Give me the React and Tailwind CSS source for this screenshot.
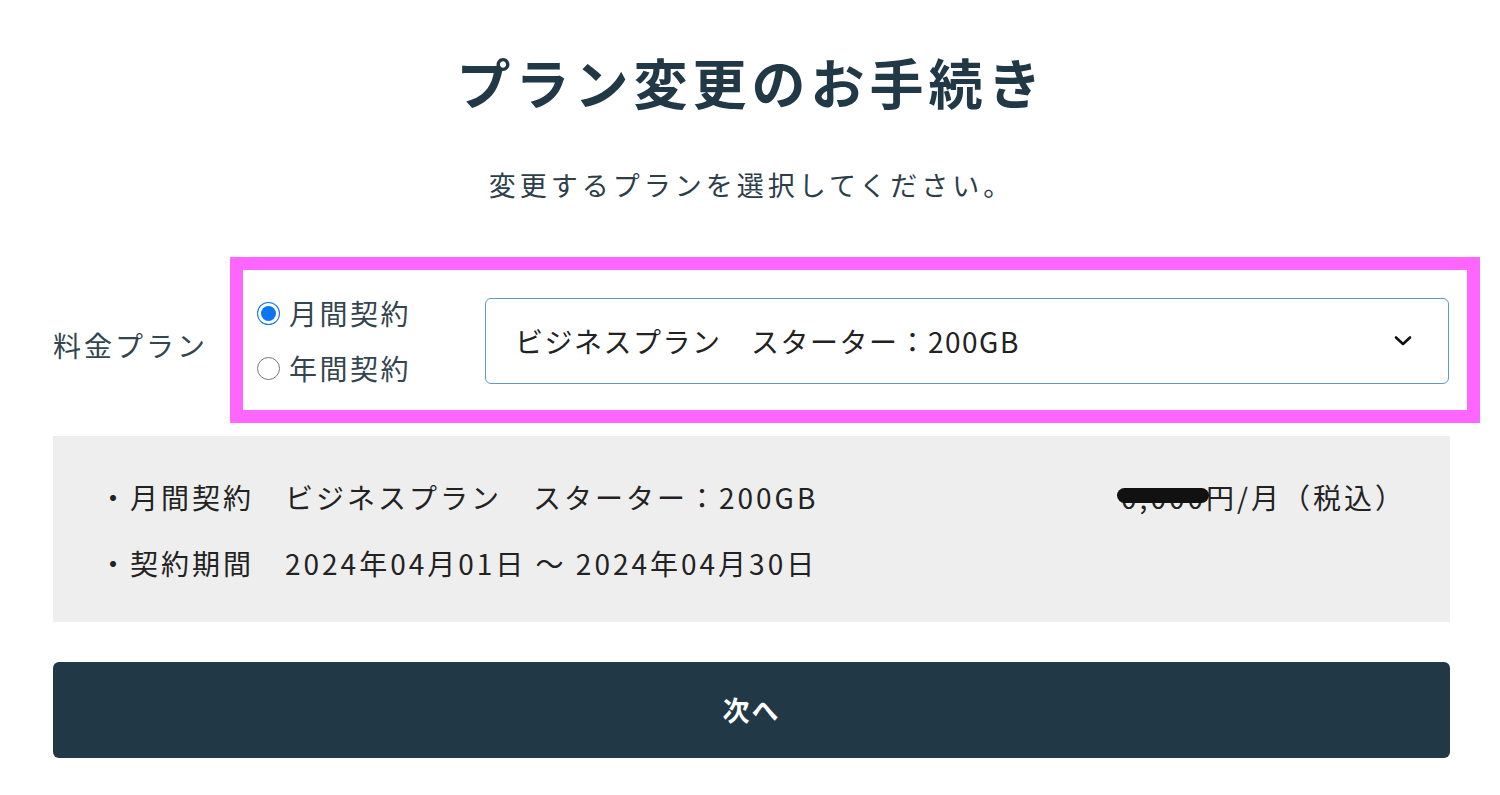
import React, { useState } from 'react';

const Radio = ({ checked, label, onClick }) => {
  return (
    <label className="flex items-center gap-[9px] cursor-pointer" onClick={onClick}>
      {checked ? (
        <span className="w-[23px] h-[23px] rounded-full bg-[#0b75f2] flex items-center justify-center">
          <span className="w-[15px] h-[15px] rounded-full bg-[#0b75f2] ring-[3px] ring-white"></span>
        </span>
      ) : (
        <span className="w-[23px] h-[23px] rounded-full border-[1.5px] border-[#767676] bg-white"></span>
      )}
      <span className="text-[28px] leading-[32px] tracking-[2.5px] text-[#33454f]">{label}</span>
    </label>
  );
};

const App = () => {
  const [contract, setContract] = useState('monthly');

  return (
    <div className="min-h-screen bg-white font-['Noto_Sans_CJK_JP','Noto_Sans',sans-serif] text-[#213846]">
      <div className="pl-[53px] pr-[50px] pt-[48px] pb-[37px]">
        <h1 className="text-center text-[54px] leading-[68px] font-bold tracking-[5px]">
          プラン変更のお手続き
        </h1>
        <p className="mt-[49px] text-center text-[27px] leading-[40px] tracking-[4px] text-[#2c3e4a]">
          変更するプランを選択してください。
        </p>

        {/* plan select row */}
        <div className="mt-[52px] flex items-center">
          <div className="w-[177px] shrink-0 mt-[10px] text-[28px] leading-[40px] tracking-[3px] text-[#33454f]">
            料金プラン
          </div>
          <div className="flex-1 -mr-[30px] border-[13px] border-[#ff66ff] flex items-center pl-[14px] pr-[18px] pt-[27px] pb-[26px]">
            <div className="w-[228px] shrink-0 flex flex-col gap-[23px]">
              <Radio checked={contract === 'monthly'} label="月間契約" onClick={() => setContract('monthly')} />
              <Radio checked={contract === 'yearly'} label="年間契約" onClick={() => setContract('yearly')} />
            </div>
            <div className="flex-1 h-[86px] rounded-[6px] border border-[#5b9cc9] bg-white flex items-center justify-between pl-[29px] pr-[35px]">
              <span className="text-[28px] leading-[40px] tracking-[1.5px] text-[#222]">
                ビジネスプラン　スターター：200GB
              </span>
              <svg width="20" height="12" viewBox="0 0 20 12" fill="none">
                <path d="M3 2.5 L10 9 L17 2.5" stroke="#111" strokeWidth="2.6" strokeLinecap="round" strokeLinejoin="round" />
              </svg>
            </div>
          </div>
        </div>

        {/* summary */}
        <div className="mt-[13px] bg-[#eeeeee] pt-[41px] pb-[39px] pl-[46px] pr-[44px] flex flex-col gap-[26px] text-[28px] leading-[40px] tracking-[3px] text-[#222]">
          <div className="flex justify-between">
            <span>・月間契約　ビジネスプラン　スターター：200GB</span>
            <span className="flex items-center">
              <span className="relative">
                0,000
                <span className="absolute left-[-4px] right-[-3px] top-[11px] h-[15px] rounded-full bg-[#111]"></span>
              </span>
              円/月（税込）
            </span>
          </div>
          <div>・契約期間　2024年04月01日 〜 2024年04月30日</div>
        </div>

        <button className="mt-[40px] w-full h-[96px] rounded-[6px] bg-[#213846] text-white text-[27px] font-bold tracking-[2px]">
          次へ
        </button>
      </div>
    </div>
  );
};

export default App;
